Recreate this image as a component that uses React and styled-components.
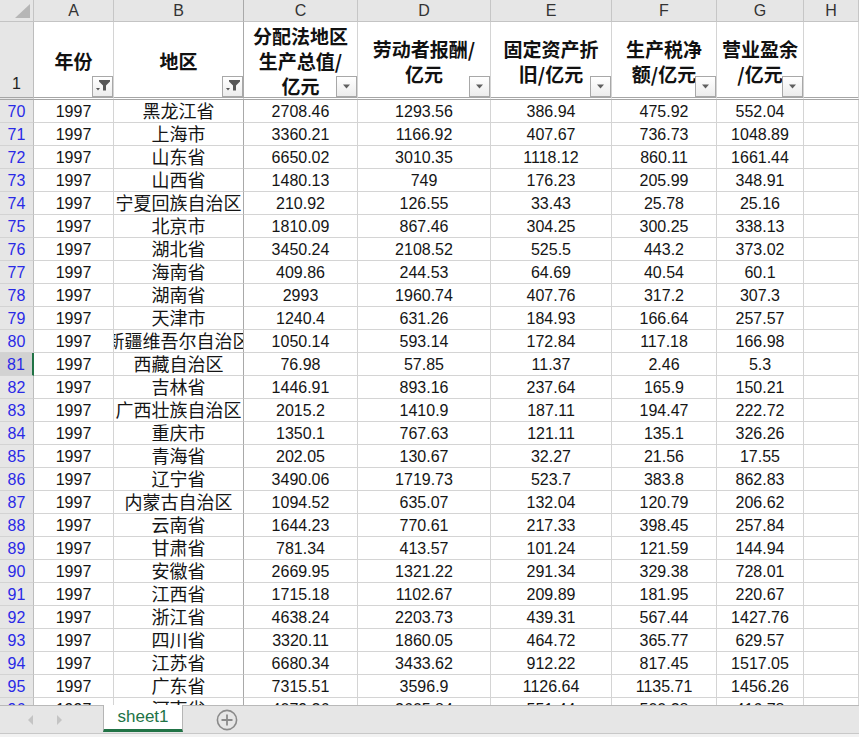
import styled, { createGlobalStyle } from "styled-components";

const GlobalStyle = createGlobalStyle`
  html, body {
    margin: 0;
    padding: 0;
    background: #ffffff;
  }
  * {
    box-sizing: border-box;
  }
`;

const columns = ["A", "B", "C", "D", "E", "F", "G", "H"];

const headers = [
  { lines: ["年份"], filter: "active" },
  { lines: ["地区"], filter: "active" },
  { lines: ["分配法地区", "生产总值/", "亿元"], filter: "menu" },
  { lines: ["劳动者报酬/", "亿元"], filter: "menu" },
  { lines: ["固定资产折", "旧/亿元"], filter: "menu" },
  { lines: ["生产税净", "额/亿元"], filter: "menu" },
  { lines: ["营业盈余", "/亿元"], filter: "menu" },
];

const rows = [
  [70, "黑龙江省", "2708.46", "1293.56", "386.94", "475.92", "552.04"],
  [71, "上海市", "3360.21", "1166.92", "407.67", "736.73", "1048.89"],
  [72, "山东省", "6650.02", "3010.35", "1118.12", "860.11", "1661.44"],
  [73, "山西省", "1480.13", "749", "176.23", "205.99", "348.91"],
  [74, "宁夏回族自治区", "210.92", "126.55", "33.43", "25.78", "25.16"],
  [75, "北京市", "1810.09", "867.46", "304.25", "300.25", "338.13"],
  [76, "湖北省", "3450.24", "2108.52", "525.5", "443.2", "373.02"],
  [77, "海南省", "409.86", "244.53", "64.69", "40.54", "60.1"],
  [78, "湖南省", "2993", "1960.74", "407.76", "317.2", "307.3"],
  [79, "天津市", "1240.4", "631.26", "184.93", "166.64", "257.57"],
  [80, "新疆维吾尔自治区", "1050.14", "593.14", "172.84", "117.18", "166.98"],
  [81, "西藏自治区", "76.98", "57.85", "11.37", "2.46", "5.3"],
  [82, "吉林省", "1446.91", "893.16", "237.64", "165.9", "150.21"],
  [83, "广西壮族自治区", "2015.2", "1410.9", "187.11", "194.47", "222.72"],
  [84, "重庆市", "1350.1", "767.63", "121.11", "135.1", "326.26"],
  [85, "青海省", "202.05", "130.67", "32.27", "21.56", "17.55"],
  [86, "辽宁省", "3490.06", "1719.73", "523.7", "383.8", "862.83"],
  [87, "内蒙古自治区", "1094.52", "635.07", "132.04", "120.79", "206.62"],
  [88, "云南省", "1644.23", "770.61", "217.33", "398.45", "257.84"],
  [89, "甘肃省", "781.34", "413.57", "101.24", "121.59", "144.94"],
  [90, "安徽省", "2669.95", "1321.22", "291.34", "329.38", "728.01"],
  [91, "江西省", "1715.18", "1102.67", "209.89", "181.95", "220.67"],
  [92, "浙江省", "4638.24", "2203.73", "439.31", "567.44", "1427.76"],
  [93, "四川省", "3320.11", "1860.05", "464.72", "365.77", "629.57"],
  [94, "江苏省", "6680.34", "3433.62", "912.22", "817.45", "1517.05"],
  [95, "广东省", "7315.51", "3596.9", "1126.64", "1135.71", "1456.26"],
  [96, "河南省", "4079.26", "2605.84", "551.44", "500.28", "416.78"],
];

const SELECTED_ROW = 81;

const Window = styled.div`
  width: 100vw;
  height: 100vh;
  display: flex;
  flex-direction: column;
  overflow: hidden;
  font-family: "Liberation Sans", sans-serif;
  background: #ffffff;
`;

const Grid = styled.div`
  flex: 1;
  min-height: 0;
  overflow: hidden;
  display: grid;
  grid-template-columns: 34px 80px 130px 114px 133px 121px 105px 87px 1fr;
  grid-template-rows: 22px 78px;
  grid-auto-rows: 23px;
  align-content: start;
`;

const Corner = styled.div`
  background: #e6e6e6;
  border-right: 1px solid #c4c4c4;
  border-bottom: 1px solid #c4c4c4;
  display: flex;
  align-items: flex-end;
  justify-content: flex-end;
  padding: 0 3px 3px 0;
`;

const CornerTriangle = styled.span`
  width: 0;
  height: 0;
  border-left: 15px solid transparent;
  border-bottom: 14px solid #b6b6b6;
`;

const ColHead = styled.div`
  background: #e6e6e6;
  border-right: 1px solid ${(p) => (p.$freeze ? "#a9a9a9" : "#c6c6c6")};
  border-bottom: 1px solid #c4c4c4;
  color: #333333;
  font-size: 16px;
  display: flex;
  align-items: center;
  justify-content: center;
`;

const RowHead = styled.div`
  background: ${(p) => (p.$selected ? "#d2d2d2" : "#e6e6e6")};
  border-right: ${(p) => (p.$selected ? "2px solid #217346" : "1px solid #bdbdbd")};
  border-bottom: ${(p) => (p.$tall ? "3px double #a6a6a6" : "1px solid #d3d3d3")};
  color: ${(p) => (p.$tall ? "#222222" : "#2a2ae6")};
  font-size: 16px;
  line-height: 18px;
  display: flex;
  justify-content: center;
  align-items: flex-end;
  padding-bottom: ${(p) => (p.$tall ? "4px" : "1px")};
`;

const HeadCell = styled.div`
  position: relative;
  border-right: 1px solid ${(p) => (p.$freeze ? "#a9a9a9" : "#d4d4d4")};
  border-bottom: 3px double #a6a6a6;
  display: flex;
  flex-direction: column;
  align-items: center;
  justify-content: center;
  padding-top: 2px;
  font-family: "Noto Sans CJK SC", "Liberation Sans", sans-serif;
  font-weight: 700;
  font-size: 19px;
  line-height: 25px;
  color: #111111;
  white-space: nowrap;
  overflow: hidden;
`;

const Cell = styled.div`
  border-right: 1px solid ${(p) => (p.$freeze ? "#a9a9a9" : "#d4d4d4")};
  border-bottom: 1px solid #d4d4d4;
  display: flex;
  align-items: flex-end;
  justify-content: center;
  overflow: hidden;
  white-space: nowrap;
  line-height: ${(p) => (p.$cjk ? "21px" : "18px")};
  font-family: ${(p) =>
    p.$cjk ? '"Noto Sans CJK SC", sans-serif' : '"Liberation Sans", sans-serif'};
  font-size: ${(p) => (p.$cjk ? "18px" : "16px")};
  padding-bottom: 1px;
  color: #151515;
`;

const FilterButton = styled.span`
  position: absolute;
  right: 0;
  bottom: 0;
  width: 21px;
  height: 21px;
  border: 1px solid #a8a8a8;
  background: linear-gradient(#ffffff, #ececec);
  display: flex;
  align-items: center;
  justify-content: center;
`;

const TabBar = styled.div`
  height: 29px;
  flex-shrink: 0;
  display: flex;
  align-items: flex-start;
  background: #e6e6e6;
  border-top: 1px solid #b9b9b9;
  border-bottom: 1px solid #c8c8c8;
`;

const NavArrows = styled.div`
  width: 103px;
  height: 27px;
  display: flex;
  align-items: center;
  padding-left: 28px;
  gap: 24px;
`;

const Arrow = styled.span`
  width: 0;
  height: 0;
  border-top: 5px solid transparent;
  border-bottom: 5px solid transparent;
  ${(p) => (p.$dir === "left" ? "border-right" : "border-left")}: 5px solid #c4c4c4;
`;

const SheetTab = styled.div`
  width: 80px;
  height: 27px;
  margin-top: -1px;
  background: #ffffff;
  border-left: 1px solid #b5b5b5;
  border-right: 1px solid #b5b5b5;
  border-bottom: 3px solid #217346;
  color: #217346;
  font-size: 17px;
  display: flex;
  align-items: center;
  justify-content: center;
`;

const AddSheet = styled.span`
  margin: 3px 0 0 33px;
  display: flex;
`;

const BottomStrip = styled.div`
  height: 3px;
  flex-shrink: 0;
  background: #f2f2f2;
`;

const FilterIcon = ({ type }) =>
  type === "active" ? (
    <svg width="19" height="19" viewBox="0 0 19 19">
      <path d="M6 3 H17 V4.5 L13 8.5 V13.5 H10 V8.5 L6 4.5 Z" fill="#555555" />
      <path d="M3 11 H7 L5 13.5 Z" fill="#555555" />
    </svg>
  ) : (
    <svg width="9" height="5" viewBox="0 0 9 5">
      <path d="M1 0.5 H8 L4.5 4.5 Z" fill="#5f5f5f" />
    </svg>
  );

const PlusCircle = () => (
  <svg width="22" height="22" viewBox="0 0 22 22">
    <circle cx="11" cy="11" r="9.6" fill="none" stroke="#8a8a8a" strokeWidth="1.6" />
    <path d="M11 5.5 V16.5 M5.5 11 H16.5" stroke="#8a8a8a" strokeWidth="1.8" />
  </svg>
);

const App = () => {
  return (
    <>
      <GlobalStyle />
      <Window>
        <Grid>
          <Corner>
            <CornerTriangle />
          </Corner>
          {columns.map((c, i) => (
            <ColHead key={c} $freeze={i === 1}>
              {c}
            </ColHead>
          ))}

          <RowHead $tall>1</RowHead>
          {headers.map((h, i) => (
            <HeadCell key={i} $freeze={i === 1}>
              {h.lines.map((l) => (
                <span key={l}>{l}</span>
              ))}
              <FilterButton>
                <FilterIcon type={h.filter} />
              </FilterButton>
            </HeadCell>
          ))}
          <HeadCell />

          {rows.map(([n, region, ...vals]) => [
            <RowHead key={`h${n}`} $selected={n === SELECTED_ROW}>
              {n}
            </RowHead>,
            <Cell key={`a${n}`}>1997</Cell>,
            <Cell key={`b${n}`} $cjk $freeze>
              {region}
            </Cell>,
            ...vals.map((v, j) => <Cell key={`v${n}-${j}`}>{v}</Cell>),
            <Cell key={`e${n}`} />,
          ])}
        </Grid>

        <TabBar>
          <NavArrows>
            <Arrow $dir="left" />
            <Arrow $dir="right" />
          </NavArrows>
          <SheetTab>sheet1</SheetTab>
          <AddSheet>
            <PlusCircle />
          </AddSheet>
        </TabBar>
        <BottomStrip />
      </Window>
    </>
  );
};

export default App;
